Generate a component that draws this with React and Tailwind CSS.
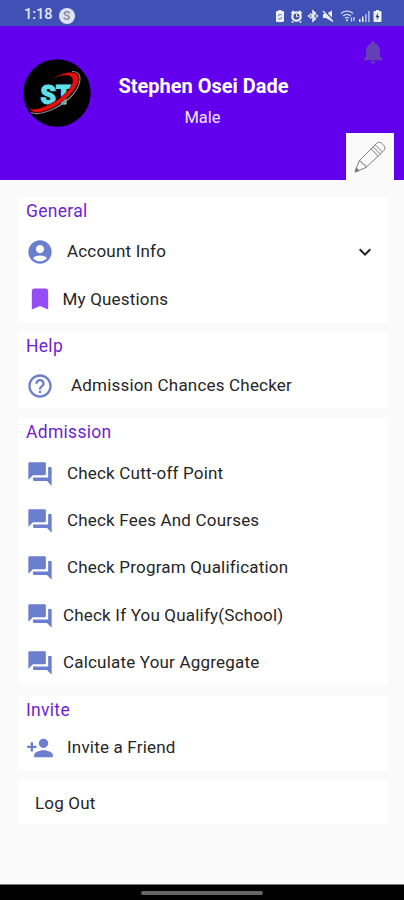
import {
  MdAccountCircle,
  MdBookmark,
  MdExpandMore,
  MdForum,
  MdHelpOutline,
  MdNotifications,
  MdPersonAdd,
} from "react-icons/md";

// --- 1. Menu data ---
const sections = [
  {
    title: "General",
    box: "h-[126px]",
    list: "mt-[6.5px]",
    items: [
      { label: "Account Info", icon: MdAccountCircle, gap: "ml-[13px]", expand: true },
      { label: "My Questions", icon: MdBookmark, color: "text-[#954df5]", gap: "ml-[8.5px]" },
    ],
  },
  {
    title: "Help",
    box: "h-[76px] mt-[9px]",
    list: "mt-[5px]",
    items: [{ label: "Admission Chances Checker", icon: MdHelpOutline, gap: "ml-[17px]" }],
  },
  {
    title: "Admission",
    box: "h-[267px] mt-2.5",
    list: "mt-[7px]",
    items: [
      { label: "Check Cutt-off Point", icon: MdForum, gap: "ml-[13px]" },
      { label: "Check Fees And Courses", icon: MdForum, gap: "ml-[13px]" },
      { label: "Check Program Qualification", icon: MdForum, gap: "ml-[13px]" },
      { label: "Check If You Qualify(School)", icon: MdForum, gap: "ml-[9px]" },
      { label: "Calculate Your Aggregate", icon: MdForum, gap: "ml-[9px]" },
    ],
  },
  {
    title: "Invite",
    box: "h-[75px] mt-[11px]",
    list: "mt-[3px]",
    items: [{ label: "Invite a Friend", icon: MdPersonAdd, gap: "ml-[13px]" }],
  },
];

// --- 2. Status bar ---
function StatusIcons() {
  return (
    <svg width="110" height="14" viewBox="0 0 110 14" fill="#eef0fb">
      {/* Sim / recycle */}
      <path d="M3.5 1h3v1H8a1 1 0 0 1 1 1v9a1 1 0 0 1-1 1H2a1 1 0 0 1-1-1V3a1 1 0 0 1 1-1h1.500z" />
      <path d="M3.300 7.200a2 2 0 0 1 3.300-1.200M6.700 8.300a2 2 0 0 1-3.300 1.200" fill="none" stroke="#3f51b5" />
      {/* Alarm */}
      <circle cx="21.500" cy="7.500" r="4.200" fill="none" stroke="#eef0fb" strokeWidth="2.200" />
      <path d="M16.500 4.500 19 2M26.500 4.500 24 2M18 12.500l-1 1M25 12.500l1 1" stroke="#eef0fb" strokeWidth="2" />
      <path d="M21.500 5v2.700h2" fill="none" stroke="#eef0fb" />
      {/* Bluetooth */}
      <path d="m35 4.500 5.500 5L38 12V2l2.500 2.500-5.500 5" fill="none" stroke="#eef0fb" strokeWidth="1.500" />
      <circle cx="34" cy="7" r="1.200" />
      <circle cx="42" cy="7" r="1.200" />
      {/* Muted */}
      <path d="M48 5h3l6-3.500v11L51 9h-3z" />
      <path d="m48.500 1 10.500 11.500" stroke="#3f51b5" strokeWidth="2.200" />
      <path d="m48 2 10 10.500" stroke="#eef0fb" strokeWidth="1.300" />
      {/* Wifi */}
      <path d="M66 4.500a9 9 0 0 1 12 0M68 7a6 6 0 0 1 8 0M70 9.300a3 3 0 0 1 4 0" fill="none" stroke="#cdd3f0" strokeWidth="1.300" />
      <circle cx="72" cy="11.300" r="1" />
      <path d="M76.500 12.500v-4M79 8v4" stroke="#cdd3f0" strokeWidth="1.300" />
      {/* Signal */}
      <path d="M84 10h1.500v3H84zM87 7.500h1.500V13H87z" />
      <path d="M90 5h1.700v8H90zM93 2h1.700v11H93z" opacity=".6" />
      {/* Battery */}
      <path d="M101 1h3v1h1.500a1 1 0 0 1 1 1v9a1 1 0 0 1-1 1h-6a1 1 0 0 1-1-1V3a1 1 0 0 1 1-1h1.500z" />
      <path d="m103 4-2.500 4h1.500l-.3 3 2.700-4h-1.600z" fill="#25336f" />
    </svg>
  );
}

function StatusBar() {
  return (
    <div className="flex h-[26px] items-center justify-between bg-[#3f51b5] pl-6 pr-[19px] pt-[5px]">
      <div className="flex items-center gap-[6px]">
        <span className="text-[14.5px] font-medium leading-none text-[#e4e7f8]">1:18</span>
        <span className="flex h-4 w-4 items-center justify-center rounded-full bg-[#dfe3f8] text-[12px] font-medium leading-none text-[#85878f]">
          S
        </span>
      </div>
      <StatusIcons />
    </div>
  );
}

// --- 3. Header ---
function Avatar() {
  return (
    <svg className="mt-[33px] ml-[23px] shrink-0" width="68" height="68" viewBox="0 0 68 68">
      <circle cx="34" cy="34" r="33.700" fill="#000" />
      <text
        x="17.500"
        y="44.500"
        textLength="31"
        lengthAdjust="spacingAndGlyphs"
        stroke="#62dfea"
        strokeWidth="1.200"
        className="fill-[#62dfea] font-[Roboto,sans-serif] text-[25px] font-black"
      >
        ST
      </text>
      <path
        d="M49 12.500C60 12 59 25 49.500 36C40 47 18 58 8 53.500"
        fill="none"
        stroke="#8b8b8b"
        strokeWidth="1.200"
      />
      <path
        d="M31 19C38 14 53 10 55.500 17.500C58 26 45 41 29 49C19 54 8.500 56 6 48.500C9 52 18 50 31 43C43 36 51 26 49.500 20C47.500 14.500 39 16 31 19Z"
        fill="#e80c0c"
        stroke="#300"
        strokeWidth=".6"
      />
    </svg>
  );
}

function Pencil() {
  return (
    <svg width="34" height="34" viewBox="0 0 34 34" fill="none" stroke="#808080" strokeWidth="1" strokeLinejoin="round">
      <path d="M2 32 6 21 23.500 3.500Q26.500.500 30 4.500Q33.500 8 30.500 11L13 27.500Z" />
      <path d="M6 21Q9 20.500 9.500 24Q13 24 13 27.500" />
      <path d="M2 32l1.400-4 2.700 2.500z" fill="#777" />
      <path d="m18 8.700 7 7.500M20 6.700l7.500 7.500M22 4.700l7.500 7.300" />
    </svg>
  );
}

function Header() {
  return (
    <header className="flex h-[154px] bg-[#6200ee]">
      <Avatar />
      <div className="ml-[12px] flex w-[201px] flex-col items-center pt-[47px] text-white">
        <h1 className="whitespace-nowrap text-[20px] font-bold leading-[26px]">Stephen Osei Dade</h1>
        <p className="mt-[8px] mr-[2px] text-[16.5px] leading-[22px] text-[#eee6fd]">Male</p>
      </div>
      <div className="ml-auto flex w-[62px] flex-col justify-between">
        <MdNotifications className="ml-[17px] mt-[12px] text-[#6540b5]" size={28} />
        <div className="mr-2.5 flex h-[47px] items-center justify-center self-end bg-[#fafafa] px-[7px]">
          <Pencil />
        </div>
      </div>
    </header>
  );
}

// --- 4. Menu ---
function MenuItem({ label, icon: Icon, color = "text-[#6b7fce]", gap, expand }) {
  return (
    <button className="flex h-[47.3px] w-full items-center pl-2 pr-[11px] text-left">
      <Icon size={28} className={`shrink-0 ${color}`} />
      <span className={`whitespace-nowrap text-[17px] tracking-[0.19px] text-[#262626] ${gap}`}>{label}</span>
      {expand && <MdExpandMore size={24} className="ml-auto text-[#222]" />}
    </button>
  );
}

function Section({ title, box, list, items }) {
  return (
    <section className={`bg-white ${box}`}>
      <h2 className="pl-2 pt-[3px] text-[17.5px] leading-[22px] tracking-[0.3px] text-[#6f1fd0]">{title}</h2>
      <div className={list}>
        {items.map((item) => (
          <MenuItem key={item.label} {...item} />
        ))}
      </div>
    </section>
  );
}

// --- 5. Main App ---
function App() {
  return (
    <div className="flex h-[900px] w-[404px] flex-col overflow-hidden bg-[#fafafa] font-[Roboto,sans-serif]">
      <StatusBar />
      <Header />
      <main className="flex-1 pl-[18px] pr-4 pt-[17px]">
        {sections.map((section) => (
          <Section key={section.title} {...section} />
        ))}
        <button className="mt-[9px] flex h-11 w-full items-center bg-white pl-[17px] pt-1 text-[17px] tracking-[0.19px] text-[#262626]">
          Log Out
        </button>
      </main>
      <div className="flex h-4 items-center justify-center border-t border-[#777] bg-black">
        <div className="h-1 w-[122px] rounded-full bg-[#666]" />
      </div>
    </div>
  );
}

export default App;
